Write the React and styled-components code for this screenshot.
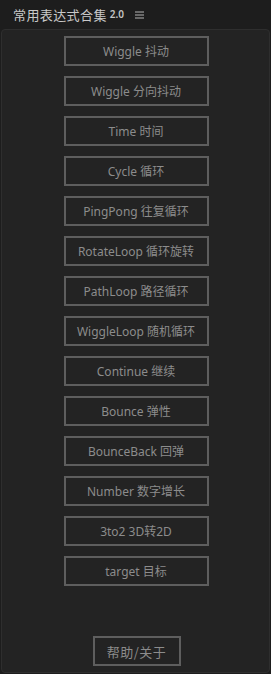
import React from 'react';
import styled, { createGlobalStyle } from 'styled-components';

// expression presets shown in the panel
const PRESETS = [
    'Wiggle 抖动',
    'Wiggle 分向抖动',
    'Time 时间',
    'Cycle 循环',
    'PingPong 往复循环',
    'RotateLoop 循环旋转',
    'PathLoop 路径循环',
    'WiggleLoop 随机循环',
    'Continue 继续',
    'Bounce 弹性',
    'BounceBack 回弹',
    'Number 数字增长',
    '3to2 3D转2D',
    'target 目标',
];

const GlobalStyle = createGlobalStyle`
    html, body {
        margin: 0;
        padding: 0;
        background: #1d1d1d;
    }
    * {
        box-sizing: border-box;
    }
`;

const App = () => {
    return (
        <>
            <GlobalStyle />
            <Shell>
                <Header>
                    <Title>常用表达式合集</Title>
                    <Version>2.0</Version>
                    <MenuIcon width="9" height="8" viewBox="0 0 9 8">
                        <rect x="0" y="0.5" width="9" height="1" fill="#b4b4b4" />
                        <rect x="0" y="3.5" width="9" height="1" fill="#b4b4b4" />
                        <rect x="0" y="6.5" width="9" height="1" fill="#b4b4b4" />
                    </MenuIcon>
                </Header>
                <Panel>
                    <ButtonList>
                        {PRESETS.map((label) => (
                            <PresetButton key={label} type="button">{label}</PresetButton>
                        ))}
                    </ButtonList>
                    <HelpButton type="button">帮助/关于</HelpButton>
                </Panel>
            </Shell>
        </>
    );
};

export default App;

const Shell = styled.div`
    width: 271px;
    height: 674px;
    display: flex;
    flex-direction: column;
    font-family: "Noto Sans", "Noto Sans CJK SC", sans-serif;
`;

const Header = styled.div`
    height: 29px;
    display: flex;
    align-items: center;
    padding-left: 13px;
    padding-bottom: 1px;
`;

const Title = styled.span`
    font-family: "Noto Sans CJK SC", sans-serif;
    font-size: 13px;
    letter-spacing: 0.4px;
    color: #c9c9c9;
`;

const Version = styled.span`
    margin-left: 3px;
    font-size: 10px;
    font-weight: 600;
    color: #c4c4c4;
`;

const MenuIcon = styled.svg`
    margin-left: 11px;
    margin-top: 1px;
`;

const Panel = styled.div`
    flex: 1;
    margin: 0 1px 1px 1px;
    background: #232323;
    border: 1px solid #2e2e2e;
    border-radius: 4px;
    display: flex;
    flex-direction: column;
    align-items: center;
    justify-content: space-between;
    padding: 6px 0 6px 0;
`;

const ButtonList = styled.div`
    display: flex;
    flex-direction: column;
    align-items: center;
    gap: 10px;
    margin-left: 1px;
`;

const PresetButton = styled.button`
    width: 145px;
    height: 30px;
    background: transparent;
    border: 2px solid #5e5e5e;
    border-radius: 0;
    padding: 0;
    color: #8c8c8c;
    font-family: "Noto Sans", "Noto Sans CJK SC", sans-serif;
    font-size: 12px;
    cursor: pointer;
`;

const HelpButton = styled(PresetButton)`
    width: 88px;
    height: 30px;
    font-family: "Noto Sans CJK SC", sans-serif;
    font-size: 13px;
    letter-spacing: 0.5px;
    margin-left: 2px;
`;
